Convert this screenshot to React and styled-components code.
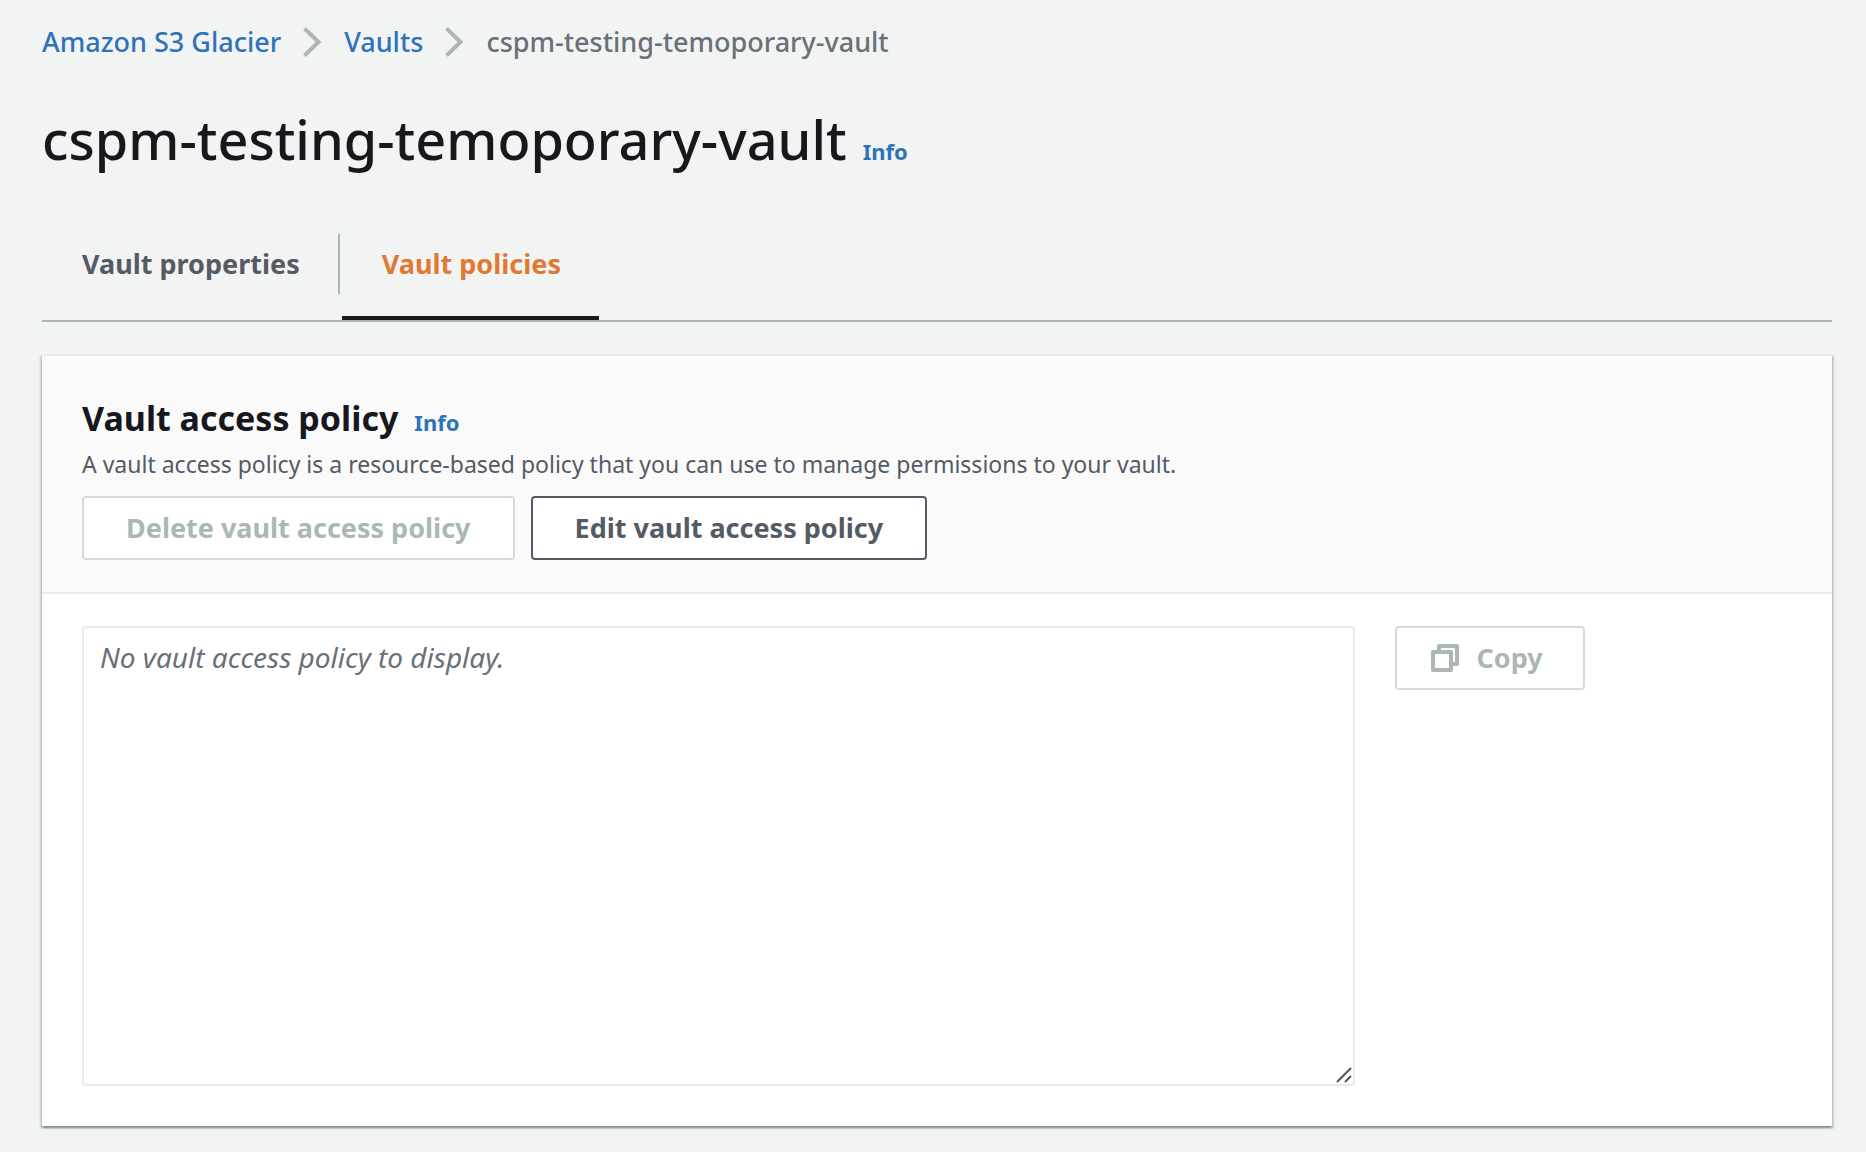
import React from "react";
import styled, { createGlobalStyle } from "styled-components";

const color = {
  page: "#f2f4f3",
  ink: "#17181e",
  body: "#545b64",
  muted: "#687078",
  link: "#2e73b8",
  accent: "#e07934",
  line: "#aab7b7",
  disabledLine: "#d5dbdb",
  softLine: "#ebebeb",
  header: "#fafafa",
};

const GlobalStyle = createGlobalStyle`
  *, *::before, *::after { box-sizing: border-box; }
  body {
    margin: 0;
    background: ${color.page};
    color: ${color.ink};
    font-family: "Noto Sans", "Open Sans", sans-serif;
    font-size: 27px;
    line-height: 40px;
  }
`;

const Page = styled.main`
  padding: 22px 34px 26px 42px;
`;

const Crumbs = styled.ol`
  display: flex;
  align-items: center;
  gap: 22px;
  margin: 0;
  padding: 0;
  list-style: none;
`;

const Crumb = styled.li`
  display: flex;
  align-items: center;
  gap: 22px;
  color: ${color.muted};
  font-weight: 500;
`;

const Link = styled.a`
  color: ${color.link};
  text-decoration: none;
`;

const InfoLink = styled(Link)`
  font-size: 22px;
  font-weight: 700;
  line-height: 32px;
`;

const TitleRow = styled.div`
  display: flex;
  align-items: baseline;
  gap: 16px;
`;

const PageTitle = styled.h1`
  margin: 0;
  font-size: 54px;
  font-weight: 500;
  line-height: 72px;
`;

const PageHeader = styled(TitleRow)`
  margin-top: 41px;
`;

const Tabs = styled.div`
  display: flex;
  gap: 2px;
  margin-top: 46px;
  border-bottom: 2px solid ${color.line};
`;

const Tab = styled.button`
  display: flex;
  align-items: center;
  height: 99px;
  padding: 0;
  border: 0;
  border-bottom: 4px solid ${(p) => (p.$active ? color.ink : "transparent")};
  background: none;
  color: ${(p) => (p.$active ? color.accent : color.body)};
  font: inherit;
  font-weight: 700;
  cursor: pointer;
`;

const TabLabel = styled.span`
  display: flex;
  align-items: center;
  height: 60px;
  margin-bottom: 9px;
  padding: 0 38px 0 40px;
  border-right: ${(p) => (p.$divided ? `2px solid ${color.line}` : "0")};
`;

const Card = styled.section`
  margin-top: 32px;
  border-top: 2px solid ${color.softLine};
  background: #fff;
  box-shadow: 0 2px 2px 0 rgba(0, 28, 36, 0.3), 2px 2px 2px 0 rgba(0, 28, 36, 0.15),
    -2px 2px 2px 0 rgba(0, 28, 36, 0.15);
`;

const CardHeader = styled.header`
  padding: 39px 40px 32px;
  border-bottom: 2px solid ${color.softLine};
  background: ${color.header};
`;

const CardTitle = styled.h2`
  margin: 0;
  font-size: 34px;
  font-weight: 700;
  line-height: 46px;
`;

const Description = styled.p`
  margin: 3px 0 12px;
  color: ${color.body};
  font-size: 23px;
  line-height: 40px;
`;

const Actions = styled.div`
  display: flex;
  gap: 16px;
`;

const Button = styled.button`
  display: inline-flex;
  align-items: center;
  gap: 18px;
  height: 64px;
  padding: 0 42px;
  border: 2px solid ${color.body};
  border-radius: 4px;
  background: #fff;
  color: ${color.body};
  font: inherit;
  font-weight: 700;
  white-space: nowrap;
  cursor: pointer;

  &:disabled {
    border-color: ${color.disabledLine};
    color: ${color.line};
    cursor: default;
  }
`;

const CopyButton = styled(Button)`
  padding: 0 40px 0 34px;
`;

const CardBody = styled.div`
  display: grid;
  grid-template-columns: repeat(12, minmax(0, 1fr));
  column-gap: 40px;
  padding: 32px 40px 40px;
`;

const PolicyField = styled.div`
  position: relative;
  display: flex;
  grid-column: span 9;
`;

const PolicyText = styled.textarea`
  flex: 1;
  min-width: 0;
  height: 460px;
  padding: 9px 16px;
  border: 2px solid ${color.softLine};
  border-radius: 4px;
  background: #fff;
  color: ${color.muted};
  font: inherit;
  font-size: 28px;
  resize: none;

  &::placeholder {
    color: ${color.muted};
    font-style: italic;
    opacity: 1;
  }
`;

const Grip = styled.svg`
  position: absolute;
  right: 3px;
  bottom: 3px;
  pointer-events: none;
`;

const CopyColumn = styled.div`
  grid-column: span 3;
`;

const Chevron = () => (
  <svg width="19" height="30" viewBox="0 0 19 30" fill="none" stroke={color.line} strokeWidth="4" aria-hidden="true">
    <path d="M1.5 1.5 L15.5 15 L1.5 28.5" />
  </svg>
);

const CopyIcon = () => (
  <svg width="28" height="28" viewBox="0 0 28 28" fill="none" stroke="currentColor" strokeWidth="4" strokeLinejoin="round" aria-hidden="true">
    <path d="M2 8H20V26H2Z" />
    <path d="M8 7V2H26V20H21" />
  </svg>
);

export default function App() {
  return (
    <>
      <GlobalStyle />
      <Page>
        <nav aria-label="Breadcrumbs">
          <Crumbs>
            <Crumb>
              <Link href="#glacier">Amazon S3 Glacier</Link>
              <Chevron />
            </Crumb>
            <Crumb>
              <Link href="#vaults">Vaults</Link>
              <Chevron />
            </Crumb>
            <Crumb aria-current="page">cspm-testing-temoporary-vault</Crumb>
          </Crumbs>
        </nav>

        <PageHeader>
          <PageTitle>cspm-testing-temoporary-vault</PageTitle>
          <InfoLink href="#vault-info">Info</InfoLink>
        </PageHeader>

        <Tabs role="tablist">
          <Tab type="button" role="tab" aria-selected="false">
            <TabLabel $divided>Vault properties</TabLabel>
          </Tab>
          <Tab type="button" role="tab" aria-selected="true" $active>
            <TabLabel>Vault policies</TabLabel>
          </Tab>
        </Tabs>

        <Card>
          <CardHeader>
            <TitleRow>
              <CardTitle>Vault access policy</CardTitle>
              <InfoLink href="#policy-info">Info</InfoLink>
            </TitleRow>
            <Description>
              A vault access policy is a resource-based policy that you can use to manage permissions to your vault.
            </Description>
            <Actions>
              <Button type="button" disabled>Delete vault access policy</Button>
              <Button type="button">Edit vault access policy</Button>
            </Actions>
          </CardHeader>
          <CardBody>
            <PolicyField>
              <PolicyText readOnly aria-label="Vault access policy" placeholder="No vault access policy to display." />
              <Grip width="16" height="16" viewBox="0 0 16 16" stroke="#55565a" strokeWidth="2" aria-hidden="true">
                <path d="M1 15 L15 1 M9 15 L15 9" />
              </Grip>
            </PolicyField>
            <CopyColumn>
              <CopyButton type="button" disabled>
                <CopyIcon />
                Copy
              </CopyButton>
            </CopyColumn>
          </CardBody>
        </Card>
      </Page>
    </>
  );
}
